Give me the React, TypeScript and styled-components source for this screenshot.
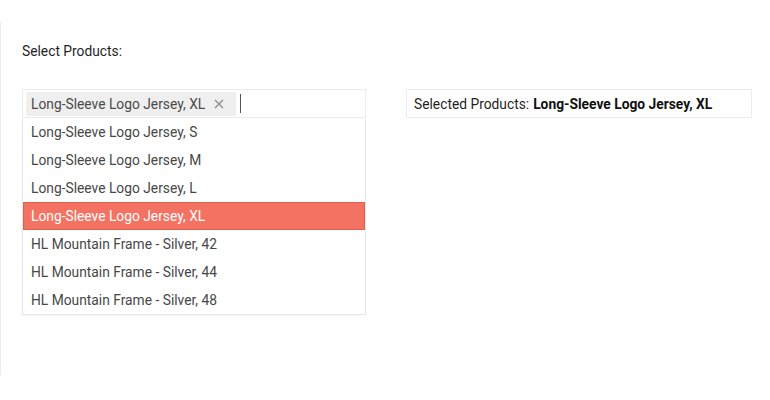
import styled, { createGlobalStyle } from 'styled-components';

const GlobalStyle = createGlobalStyle`
    html, body {
        margin: 0;
        padding: 0;
        background: #ffffff;
        font-family: Roboto, "Liberation Sans", Arial, sans-serif;
    }
`;

const products = [
    'Long-Sleeve Logo Jersey, S',
    'Long-Sleeve Logo Jersey, M',
    'Long-Sleeve Logo Jersey, L',
    'Long-Sleeve Logo Jersey, XL',
    'HL Mountain Frame - Silver, 42',
    'HL Mountain Frame - Silver, 44',
    'HL Mountain Frame - Silver, 48',
];

const selected = 'Long-Sleeve Logo Jersey, XL';

const Page = styled.div`
    margin-top: 22px;
    height: 353px;
    border-left: 1px solid #ececec;
    padding: 21px 0 0 21px;
    box-sizing: border-box;
`;

const Label = styled.div`
    font-size: 13.8px;
    line-height: 16px;
    color: #1f1f1f;
    margin-bottom: 30px;
`;

const Row = styled.div`
    display: flex;
    align-items: flex-start;
    gap: 40px;
`;

const Combo = styled.div`
    width: 344px;
`;

const Input = styled.div`
    height: 29px;
    box-sizing: border-box;
    border: 1px solid #ececec;
    display: flex;
    align-items: center;
    padding: 0 3px;
    gap: 4px;
`;

const Chip = styled.div`
    height: 24px;
    display: flex;
    align-items: center;
    background: #efefef;
    padding: 0 12px 0 5px;
    font-size: 13.8px;
    color: #4a4a4a;
    gap: 9px;
`;

const Remove = styled.span`
    display: flex;
    align-items: center;
    color: #8a8a8a;
`;

const Caret = styled.span`
    width: 1px;
    height: 19px;
    background: #555;
`;

const List = styled.ul`
    list-style: none;
    margin: 0;
    padding: 0;
    border: 1px solid #e6e6e6;
    border-top: none;
    box-shadow: 0 1px 2px rgba(0, 0, 0, 0.04);
`;

const Item = styled.li<{ $active?: boolean }>`
    height: 28px;
    line-height: 28px;
    padding: 0 8px;
    font-size: 13.8px;
    color: ${p => (p.$active ? '#ffffff' : '#474747')};
    background: ${p => (p.$active ? '#f47262' : 'transparent')};
    box-shadow: ${p => (p.$active ? 'inset 0 0 0 1px #e0604f' : 'none')};
`;

const Summary = styled.div`
    width: 346px;
    height: 29px;
    box-sizing: border-box;
    border: 1px solid #ececec;
    display: flex;
    align-items: center;
    padding: 0 7px;
    font-size: 13.8px;
    color: #1f1f1f;

    b {
        font-weight: 700;
        margin-left: 4px;
        color: #111;
    }
`;

const CloseIcon = () => (
    <svg width="10" height="10" viewBox="0 0 10 10">
        <path d="M1 1 L9 9 M9 1 L1 9" stroke="currentColor" strokeWidth="1.3" fill="none" />
    </svg>
);

export default function App() {
    return (
        <>
            <GlobalStyle />
            <Page>
                <Label>Select Products:</Label>
                <Row>
                    <Combo>
                        <Input>
                            <Chip>
                                {selected}
                                <Remove><CloseIcon /></Remove>
                            </Chip>
                            <Caret />
                        </Input>
                        <List>
                            {products.map(p => (
                                <Item key={p} $active={p === selected}>{p}</Item>
                            ))}
                        </List>
                    </Combo>
                    <Summary>
                        Selected Products:<b>{selected}</b>
                    </Summary>
                </Row>
            </Page>
        </>
    );
}
